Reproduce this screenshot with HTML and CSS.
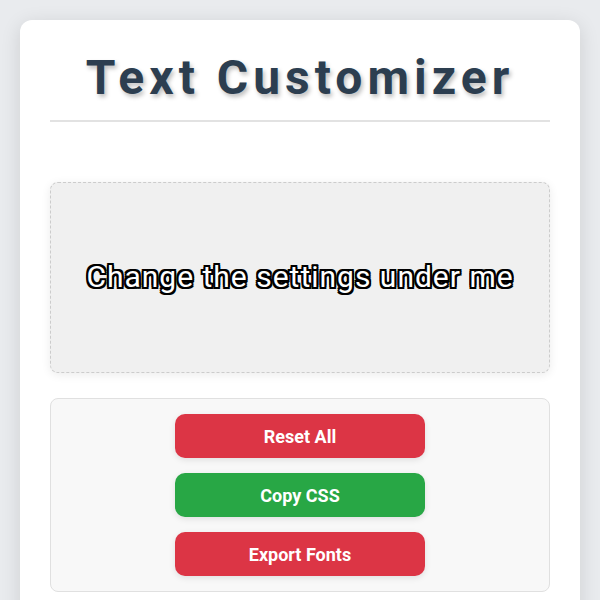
FILE: index.html
```html
<!DOCTYPE html>
<html lang="en">
<head>
<meta charset="utf-8">
<title>Text Customizer</title>
<link rel="stylesheet" href="styles.css">
</head>
<body>
<main class="card">
  <header class="header">
    <h1 class="title">Text Customizer</h1>
  </header>
  <section class="preview">
    <p class="preview-text">Change the settings under me</p>
  </section>
  <section class="controls">
    <button class="btn btn-red">Reset All</button>
    <button class="btn btn-green">Copy CSS</button>
    <button class="btn btn-red">Export Fonts</button>
  </section>
</main>
</body>
</html>
```
FILE: styles.css
```css
* { box-sizing: border-box; }
html, body { height: 100%; }
body {
  margin: 0;
  padding: 20px;
  background: #e9ebee;
  font-family: Roboto, "Liberation Sans", sans-serif;
}
.card {
  background: #fff;
  border-radius: 12px;
  padding: 30px;
  box-shadow: 0 4px 20px rgba(0,0,0,0.12);
  min-height: 700px;
}
.header {
  border-bottom: 2px solid #e2e2e2;
  padding-bottom: 14px;
}
.title {
  margin: 0;
  text-align: center;
  font-size: 48px;
  line-height: 56px;
  font-weight: 700;
  letter-spacing: 5px;
  color: #2c3e50;
  text-shadow: 2px 3px 4px rgba(0,0,0,0.25);
}
.preview {
  margin-top: 60px;
  height: 191px;
  background: #f0f0f0;
  border: 1px dashed #ccc;
  border-radius: 8px;
  box-shadow: 0 2px 10px rgba(0,0,0,0.08);
  display: flex;
  align-items: center;
  justify-content: center;
}
.preview-text {
  margin: 0 0 2px;
  font-size: 30px;
  letter-spacing: 1px;
  color: #fff;
  text-shadow: -2px -2px 0 #000, 2px -2px 0 #000, -2px 2px 0 #000, 2px 2px 0 #000,
               0 -2px 0 #000, 0 2px 0 #000, -2px 0 0 #000, 2px 0 0 #000;
}
.controls {
  margin-top: 25px;
  padding: 15px;
  background: #f8f8f8;
  border: 1px solid #e0e0e0;
  border-radius: 8px;
  display: flex;
  flex-direction: column;
  align-items: center;
  gap: 15px;
}
.btn {
  width: 250px;
  height: 44px;
  border: none;
  border-radius: 10px;
  color: #fff;
  font-family: Roboto, "Liberation Sans", sans-serif;
  font-size: 18px;
  font-weight: 700;
  box-shadow: 0 2px 6px rgba(0,0,0,0.1);
}
.btn-red { background: #dc3545; }
.btn-green { background: #28a745; }
```
